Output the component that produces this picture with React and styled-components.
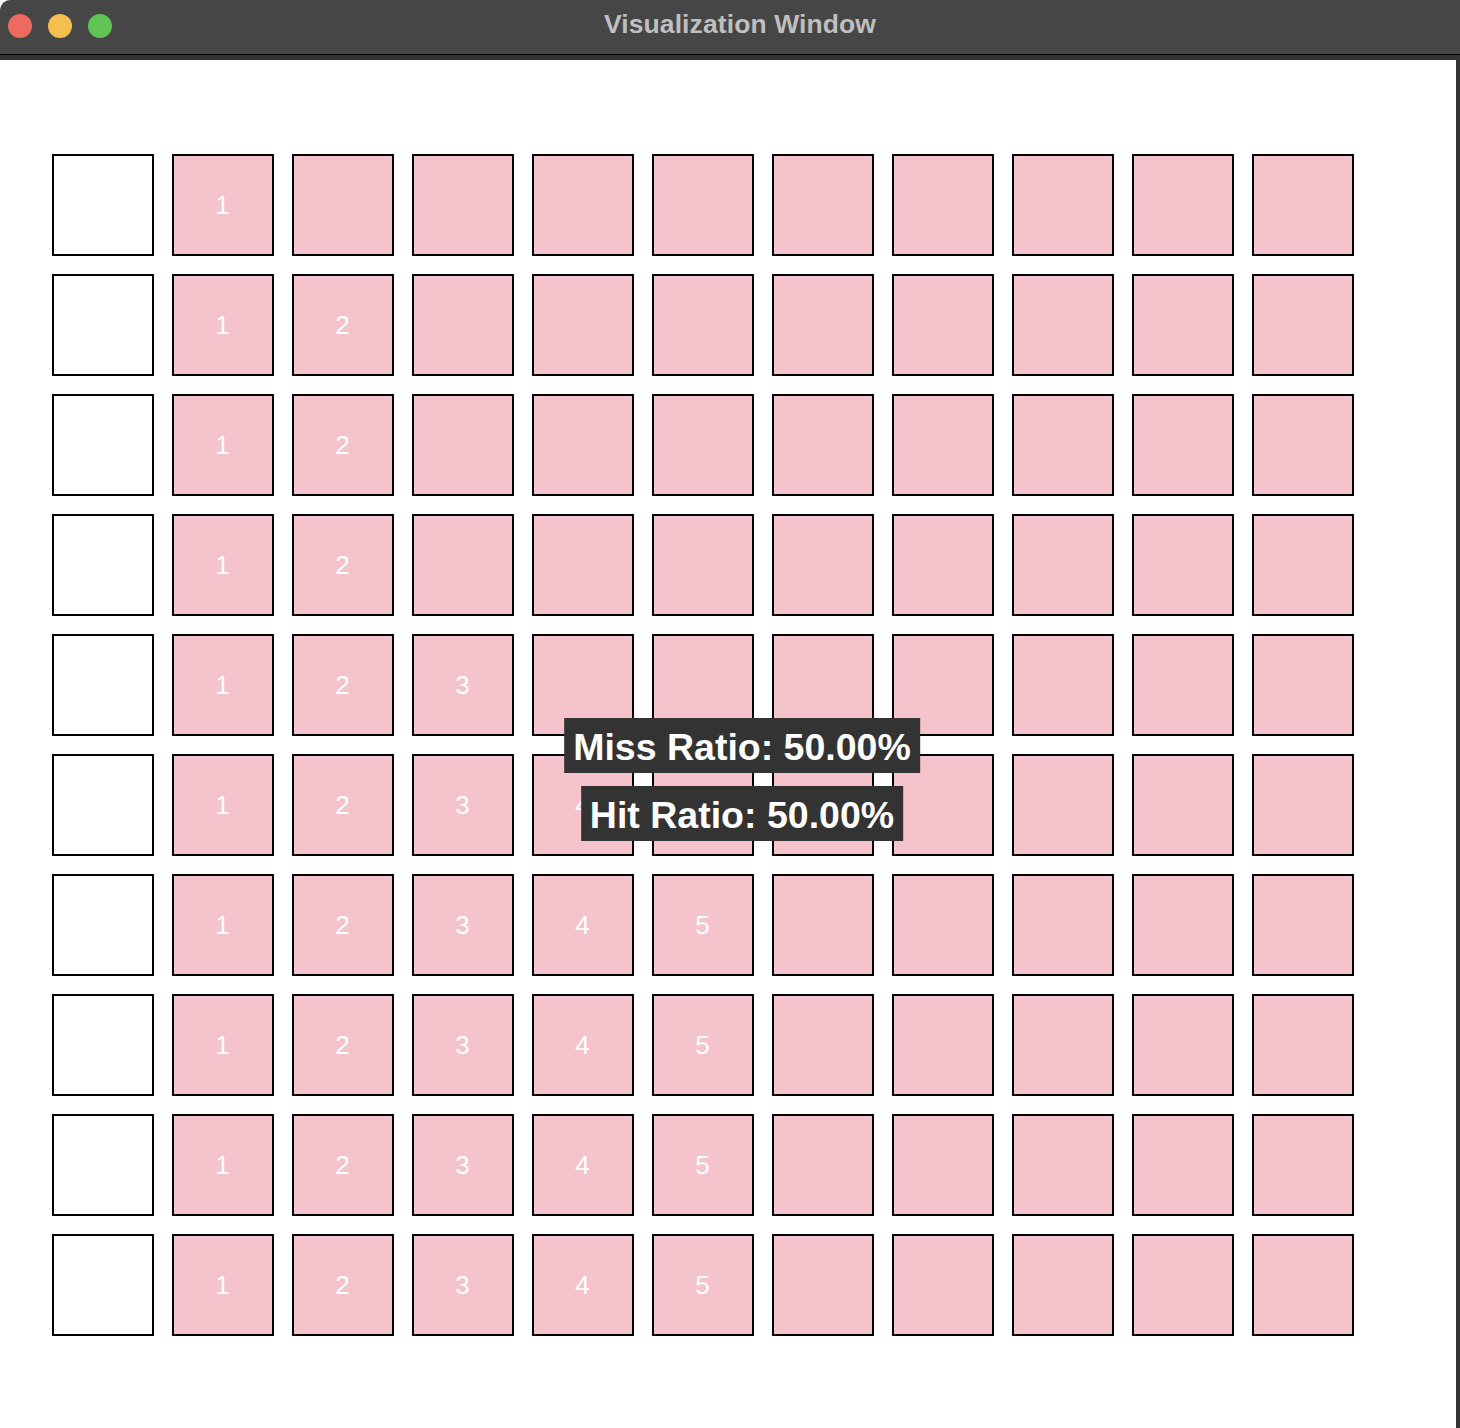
import styled, { createGlobalStyle } from "styled-components";

const GlobalStyle = createGlobalStyle`
  html, body {
    margin: 0;
    padding: 0;
    background: #ffffff;
  }
  body {
    font-family: "Liberation Sans", Arial, Helvetica, sans-serif;
  }
`;

const Window = styled.div`
  width: 1460px;
  height: 1428px;
  display: flex;
  flex-direction: column;
  overflow: hidden;
`;

const TitleBar = styled.div`
  position: relative;
  height: 55px;
  flex-shrink: 0;
  box-sizing: border-box;
  background: #464646;
  border-bottom: 1px solid #000000;
  border-top-left-radius: 10px;
  display: flex;
  align-items: center;
  justify-content: center;
  padding: 0 0 5px 20px;
`;

const Lights = styled.div`
  position: absolute;
  left: 8px;
  top: 14px;
  display: flex;
  gap: 16px;
`;

const Light = styled.span`
  width: 24px;
  height: 24px;
  border-radius: 50%;
  background: ${(props) => props.color};
`;

const Title = styled.div`
  color: #bfbfbf;
  font-size: 26.5px;
  font-weight: 700;
  letter-spacing: 0.1px;
`;

const Strip = styled.div`
  height: 5px;
  flex-shrink: 0;
  background: #333333;
`;

const Body = styled.div`
  flex: 1;
  display: flex;
`;

const Content = styled.div`
  position: relative;
  flex: 1;
  background: #ffffff;
  padding: 94px 0 0 52px;
`;

const RightEdge = styled.div`
  width: 4px;
  background: #333333;
`;

const Grid = styled.div`
  display: grid;
  grid-template-columns: repeat(11, 102px);
  grid-auto-rows: 102px;
  gap: 18px;
`;

const Cell = styled.div`
  box-sizing: border-box;
  border: 2px solid #000000;
  background: ${(props) => (props.$filled ? "#f4c3cc" : "#ffffff")};
  display: flex;
  align-items: center;
  justify-content: center;
  padding-right: 1px;
  color: #ffffff;
  font-size: 26px;
`;

const Overlay = styled.div`
  position: absolute;
  left: 742px;
  top: 658px;
  transform: translateX(-50%);
  display: flex;
  flex-direction: column;
  align-items: center;
  gap: 13px;
`;

const Label = styled.div`
  background: #333333;
  color: #ffffff;
  font-size: 37.5px;
  font-weight: 700;
  line-height: 43px;
  padding: 8px 9px 4px;
  white-space: nowrap;
`;

// how many numbered cells each row shows
const counts = [1, 2, 2, 2, 3, 4, 5, 5, 5, 5];

export default function App() {
  return (
    <Window>
      <GlobalStyle />
      <TitleBar>
        <Lights>
          <Light color="#ec6a5e" />
          <Light color="#f4bf4f" />
          <Light color="#61c554" />
        </Lights>
        <Title>Visualization Window</Title>
      </TitleBar>
      <Strip />
      <Body>
        <Content>
          <Grid>
            {counts.map((count, r) =>
              Array.from({ length: 11 }, (_, c) => (
                <Cell key={`${r}-${c}`} $filled={c > 0}>
                  {c > 0 && c <= count ? c : ""}
                </Cell>
              ))
            )}
          </Grid>
          <Overlay>
            <Label>Miss Ratio: 50.00%</Label>
            <Label>Hit Ratio: 50.00%</Label>
          </Overlay>
        </Content>
        <RightEdge />
      </Body>
    </Window>
  );
}
